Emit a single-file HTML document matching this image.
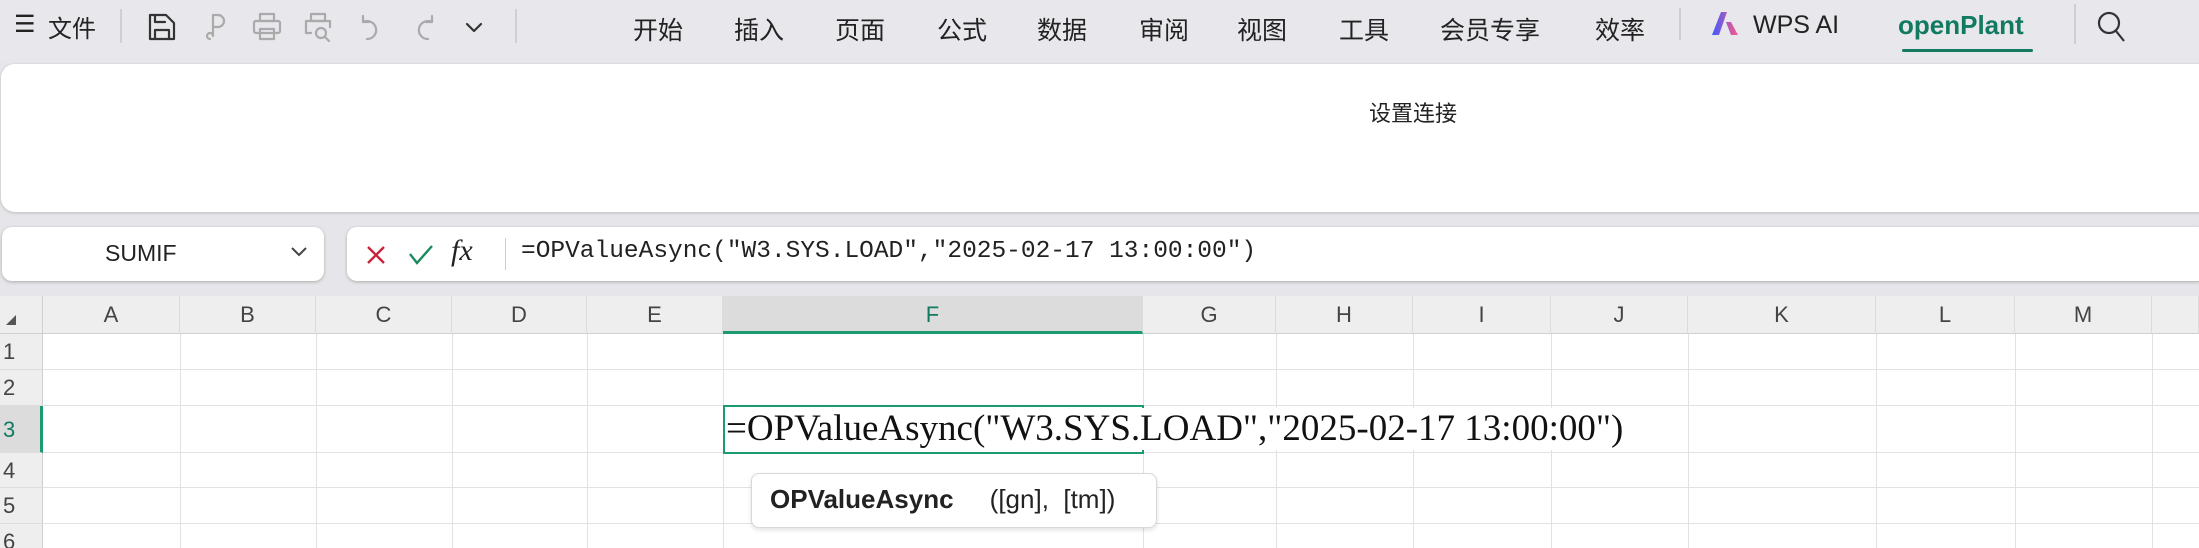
<!DOCTYPE html>
<html><head><meta charset="utf-8"><style>
*{margin:0;padding:0;box-sizing:border-box}
html,body{width:2199px;height:548px;overflow:hidden}
body{background:#e6e6ea;font-family:"Liberation Sans","Noto Sans CJK SC",sans-serif;position:relative;color:#222}
.a{position:absolute}
.tab{position:absolute;top:11px;font-size:25px;color:#222;white-space:nowrap}
.sep{position:absolute;width:2px;background:#cfcfd3}
svg.i{position:absolute;top:12px;width:30px;height:30px;fill:none;stroke-width:2.2;stroke-linecap:round;stroke-linejoin:round}
.col{position:absolute;top:296px;height:38px;background:#eeeeee;border-right:1px solid #dcdcdc;border-bottom:1px solid #d0d0d0;font-size:22px;color:#444;text-align:center;line-height:38px}
.row{position:absolute;left:0;width:43px;background:#eeeeee;border-bottom:1px solid #dcdcdc;border-right:1px solid #d0d0d0;font-size:22px;color:#444;padding-left:3px}
.vl{position:absolute;top:334px;height:214px;width:1px;background:#e2e2e2}
.hl{position:absolute;left:43px;width:2156px;height:1px;background:#e2e2e2}
</style></head><body>
<div class="a" style="left:0;top:0;width:2199px;height:63px;background:#e8e8ec"></div>
<div class="a" style="left:14px;top:10px;font-size:24px">☰</div>
<div class="tab" style="left:48px;top:9px;font-size:24px">文件</div>
<div class="sep" style="left:120px;top:9px;height:34px"></div>
<svg class="i" style="left:147px" viewBox="0 0 30 30" stroke="#333"><path d="M3 3h16l8 8v16H3z"/><path d="M8 27v-9h14v9M8 3v7h10"/></svg>
<svg class="i" style="left:200px" viewBox="0 0 30 30" stroke="#aaa"><path d="M10 27a3 3 0 1 1 3-3V3h5a6 6 0 0 1 0 12h-5"/></svg>
<svg class="i" style="left:252px" viewBox="0 0 30 30" stroke="#aaa"><rect x="8" y="2" width="14" height="7"/><rect x="2" y="9" width="26" height="12" rx="2"/><rect x="8" y="17" width="14" height="10"/></svg>
<svg class="i" style="left:303px" viewBox="0 0 30 30" stroke="#aaa"><rect x="8" y="2" width="14" height="7"/><path d="M8 21H3V9h24v6"/><circle cx="18" cy="21" r="5"/><path d="M22 25l4 4"/></svg>
<svg class="i" style="left:357px" viewBox="0 0 30 30" stroke="#aaa"><path d="M6 10a9 9 0 1 1 4 17M6 4v6h6"/></svg>
<svg class="i" style="left:408px" viewBox="0 0 30 30" stroke="#aaa"><path d="M24 10a9 9 0 1 0-4 17M24 4v6h-6"/></svg>
<svg class="i" style="left:462px;width:24px" viewBox="0 0 24 30" stroke="#333"><path d="M5 12l7 7 7-7"/></svg>
<div class="sep" style="left:515px;top:9px;height:34px"></div>
<div class="tab" style="left:633px">开始</div>
<div class="tab" style="left:734px">插入</div>
<div class="tab" style="left:835px">页面</div>
<div class="tab" style="left:937px">公式</div>
<div class="tab" style="left:1037px">数据</div>
<div class="tab" style="left:1139px">审阅</div>
<div class="tab" style="left:1237px">视图</div>
<div class="tab" style="left:1339px">工具</div>
<div class="tab" style="left:1440px">会员专享</div>
<div class="tab" style="left:1595px">效率</div>
<div class="sep" style="left:1679px;top:8px;height:32px"></div>
<svg class="a" style="left:1712px;top:12px" width="32" height="23" viewBox="0 0 32 23"><defs><linearGradient id="g" x1="0" x2="1"><stop offset="0" stop-color="#3b5bff"/><stop offset="1" stop-color="#ff5a8a"/></linearGradient></defs><path d="M0 23L9 0h6l-8 23zM14 10h5l7 13h-7z" fill="url(#g)"/></svg>
<div class="tab" style="left:1753px">WPS AI</div>
<div class="tab" style="left:1898px;color:#117a60;font-weight:bold;font-size:26px;top:10px">openPlant</div>
<div class="a" style="left:1902px;top:49px;width:131px;height:3px;background:#117a60;border-radius:2px"></div>
<div class="sep" style="left:2074px;top:4px;height:40px"></div>
<svg class="a" style="left:2096px;top:10px" width="34" height="32" viewBox="0 0 34 32" fill="none" stroke="#333" stroke-width="2.2"><circle cx="13" cy="13" r="10"/><path d="M20 21l8 10"/></svg>
<div class="a" style="left:1px;top:64px;width:2230px;height:148px;background:#fff;border-radius:14px;box-shadow:0 1px 3px #bbb"></div>
<div class="a" style="left:1369px;top:96px;font-size:22px">设置连接</div>
<div class="a" style="left:2px;top:227px;width:322px;height:54px;background:#fff;border-radius:10px;box-shadow:0 1px 3px #aaa"></div>
<div class="a" style="left:105px;top:240px;font-size:23px">SUMIF</div>
<svg class="a" style="left:290px;top:245px" width="18" height="14" viewBox="0 0 18 14" fill="none" stroke="#444" stroke-width="2"><path d="M2 3l7 7 7-7"/></svg>
<div class="a" style="left:347px;top:227px;width:1860px;height:54px;background:#fff;border-radius:10px;box-shadow:0 1px 3px #aaa"></div>
<svg class="a" style="left:365px;top:244px" width="22" height="22" viewBox="0 0 22 22" stroke="#c8243d" stroke-width="2.4"><path d="M3 3l16 16M19 3L3 19"/></svg>
<svg class="a" style="left:408px;top:244px" width="26" height="22" viewBox="0 0 26 22" fill="none" stroke="#1a8a5e" stroke-width="2.4"><path d="M2 10l7 9L24 2"/></svg>
<div class="a" style="left:451px;top:234px;font-family:'Liberation Serif',serif;font-style:italic;font-size:30px">fx</div>
<div class="sep" style="left:505px;top:238px;height:32px;width:1px;background:#ccc"></div>
<div class="a" style="left:521px;top:238px;font-family:'Liberation Mono',monospace;font-size:24.5px;white-space:nowrap">=OPValueAsync("W3.SYS.LOAD","2025-02-17 13:00:00")</div>
<div class="a" style="left:0;top:296px;width:2199px;height:252px;background:#fff"></div>
<div class="a" style="left:0;top:296px;width:43px;height:38px;background:#eeeeee;border-bottom:1px solid #d0d0d0;border-right:1px solid #d0d0d0"></div>
<svg class="a" style="left:5px;top:314px" width="12" height="12"><path d="M11 1L11 11L1 11z" fill="#555"/></svg>
<div class="col" style="left:43px;width:137px">A</div>
<div class="col" style="left:180px;width:136px">B</div>
<div class="col" style="left:316px;width:136px">C</div>
<div class="col" style="left:452px;width:135px">D</div>
<div class="col" style="left:587px;width:136px">E</div>
<div class="col" style="left:723px;width:420px;background:#dcdcdc;color:#117a60;border-bottom:3px solid #1e9b6e">F</div>
<div class="col" style="left:1143px;width:133px">G</div>
<div class="col" style="left:1276px;width:137px">H</div>
<div class="col" style="left:1413px;width:138px">I</div>
<div class="col" style="left:1551px;width:137px">J</div>
<div class="col" style="left:1688px;width:188px">K</div>
<div class="col" style="left:1876px;width:139px">L</div>
<div class="col" style="left:2015px;width:137px">M</div>
<div class="col" style="left:2152px;width:47px"></div>
<div class="row" style="top:334px;height:36px;line-height:36px">1</div>
<div class="row" style="top:370px;height:36px;line-height:36px">2</div>
<div class="row" style="top:406px;height:47px;line-height:47px;background:#dcdcdc;color:#117a60;border-right:3px solid #1e9b6e">3</div>
<div class="row" style="top:453px;height:35px;line-height:35px">4</div>
<div class="row" style="top:488px;height:36px;line-height:36px">5</div>
<div class="row" style="top:524px;height:30px;line-height:36px">6</div>
<div class="vl" style="left:180px"></div><div class="vl" style="left:316px"></div><div class="vl" style="left:452px"></div><div class="vl" style="left:587px"></div><div class="vl" style="left:723px"></div><div class="vl" style="left:1143px"></div><div class="vl" style="left:1276px"></div><div class="vl" style="left:1413px"></div><div class="vl" style="left:1551px"></div><div class="vl" style="left:1688px"></div><div class="vl" style="left:1876px"></div><div class="vl" style="left:2015px"></div><div class="vl" style="left:2152px"></div>
<div class="hl" style="top:369px"></div><div class="hl" style="top:405px"></div><div class="hl" style="top:452px"></div><div class="hl" style="top:487px"></div><div class="hl" style="top:523px"></div>
<div class="a" style="left:723px;top:405px;width:421px;height:49px;border:2px solid #1e9b6e;background:transparent"></div>
<div class="a" style="left:726px;top:408px;height:42px;line-height:42px;padding-right:8px;background:#fff;font-family:'Liberation Serif',serif;font-size:37px;color:#111;white-space:nowrap">=OPValueAsync("W3.SYS.LOAD","2025-02-17 13:00:00")</div>
<div class="a" style="left:751px;top:473px;width:406px;height:55px;background:#fff;border:1px solid #d8d8d8;border-radius:8px;box-shadow:0 2px 5px rgba(0,0,0,.12)"></div>
<div class="a" style="left:770px;top:484px;font-size:26px;white-space:nowrap"><b>OPValueAsync</b>&nbsp;&nbsp;&nbsp;&nbsp;&nbsp;([gn],&nbsp;&nbsp;[tm])</div>
</body></html>
